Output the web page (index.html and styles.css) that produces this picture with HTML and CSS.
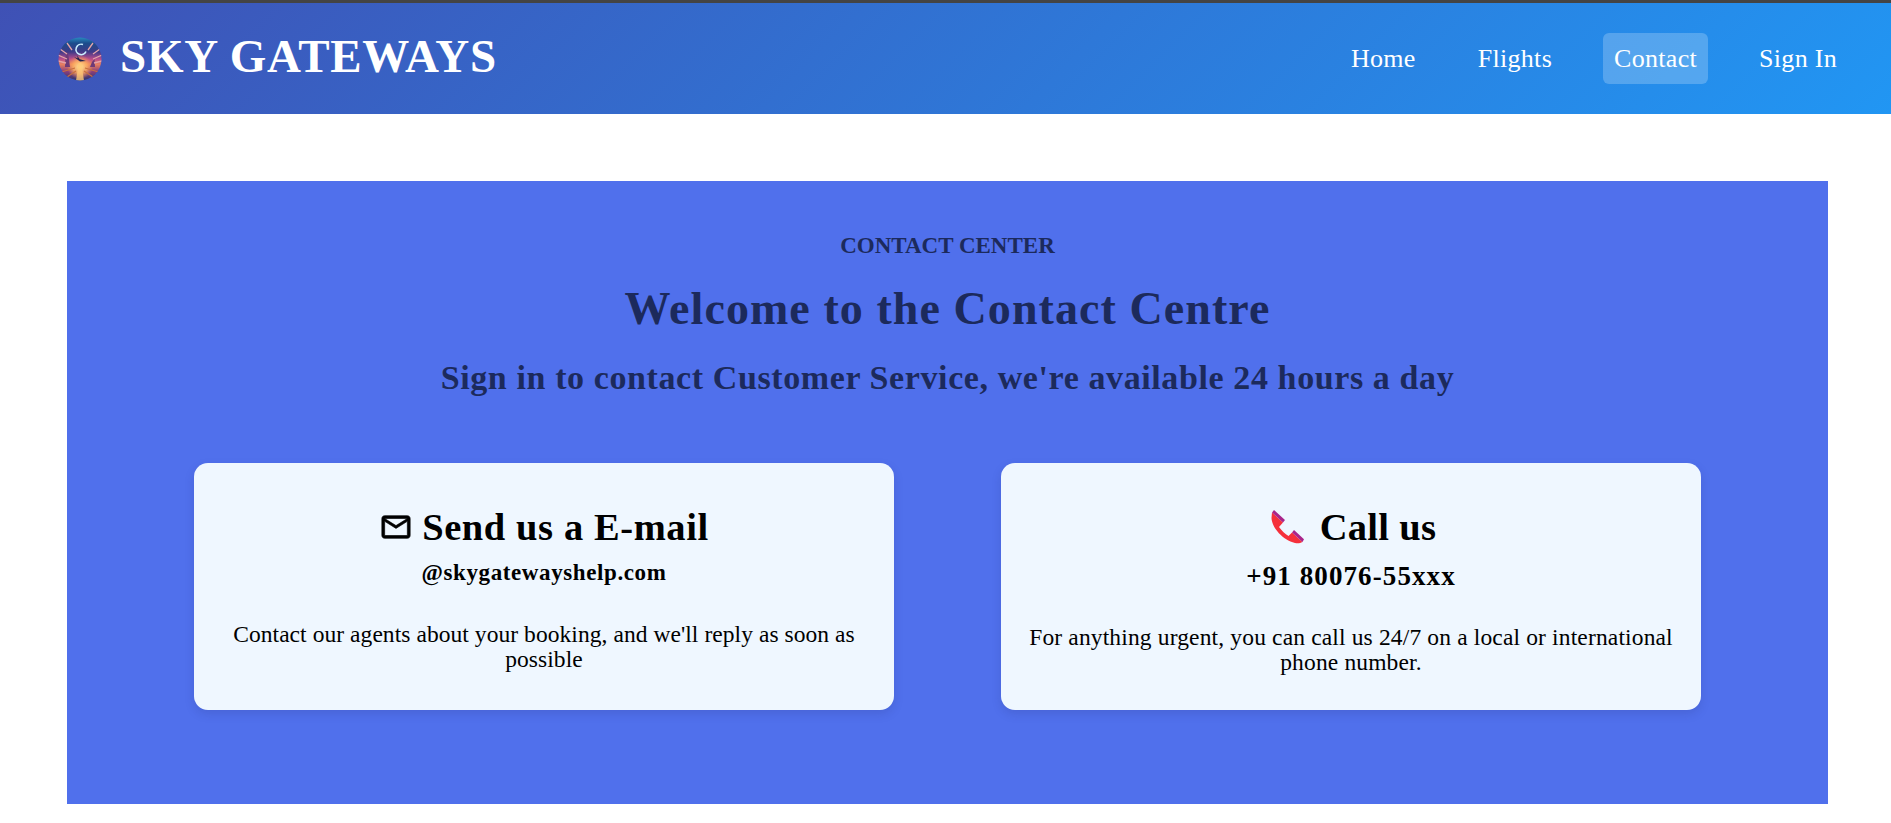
FILE: index.html
```html
<!DOCTYPE html>
<html lang="en">
<head>
<meta charset="utf-8">
<title>Sky Gateways</title>
<link rel="stylesheet" href="styles.css">
</head>
<body>
<header class="topbar">
  <div class="brand">
    <svg class="logo" viewBox="0 0 44 44" aria-hidden="true">
      <defs>
        <clipPath id="disc"><circle cx="22" cy="22" r="21.5"/></clipPath>
        <linearGradient id="sky" x1="0" y1="0" x2="0" y2="1">
          <stop offset="0" stop-color="#2b8fc4"/>
          <stop offset=".14" stop-color="#1b4d8c"/>
          <stop offset=".34" stop-color="#3f3a88"/>
          <stop offset=".5" stop-color="#b94c8c"/>
          <stop offset=".62" stop-color="#e9805e"/>
          <stop offset=".78" stop-color="#8a3f7c"/>
          <stop offset="1" stop-color="#25356e"/>
        </linearGradient>
        <radialGradient id="sun" cx=".5" cy=".5" r=".5">
          <stop offset="0" stop-color="#ffe79a"/>
          <stop offset=".55" stop-color="#ffb060" stop-opacity=".8"/>
          <stop offset="1" stop-color="#ff9a50" stop-opacity="0"/>
        </radialGradient>
      </defs>
      <g clip-path="url(#disc)">
        <rect width="44" height="44" fill="url(#sky)"/>
        <ellipse cx="22" cy="30" rx="13" ry="12" fill="url(#sun)"/>
        <path d="M18 44 L20.5 26 L23.5 26 L26 44 Z" fill="#ffc877" opacity=".8"/>
        <path d="M7 30 L7.5 19 L9 15 L10.5 19 L12 30 Z M37 30 L36.5 22 L34 25 L32 30 Z" fill="#6d3a78"/>
        <path d="M0 18 L9 22 M0 24 L8 26 M2 12 L9 17 M44 18 L35 22 M44 24 L36 26 M42 12 L35 17 M9 6 L14 13 M35 6 L30 13" stroke="#e3a3a8" stroke-width="1.3"/>
        <path d="M0 36 L17 31 M44 36 L27 31 M6 42 L18 34 M38 42 L26 34" stroke="#c9703e" stroke-width="1.1"/>
        <path d="M16 20 L23 22.5 L28 24 L22 24.5 Z M19 18.5 L22 22.5 L20 22.5 Z" fill="#23224e"/>
      </g>
      <path d="M25 7.5 A5.2 5.2 0 1 0 28 14.5" fill="none" stroke="#c9efff" stroke-width="1.6"/>
    </svg>
    <span class="brand-name">SKY GATEWAYS</span>
  </div>
  <nav class="nav">
    <a class="nav-link" href="#">Home</a>
    <a class="nav-link" href="#">Flights</a>
    <a class="nav-link is-active" href="#">Contact</a>
    <a class="nav-link" href="#">Sign In</a>
  </nav>
</header>
<main class="page">
  <section class="panel">
    <p class="eyebrow">CONTACT CENTER</p>
    <h1 class="title">Welcome to the Contact Centre</h1>
    <h2 class="subtitle">Sign in to contact Customer Service, we're available 24 hours a day</h2>
    <div class="cards">
      <article class="card">
        <h3 class="card-title">
          <svg class="icon-mail" viewBox="0 0 24 24" aria-hidden="true">
            <path d="M20 4H4c-1.1 0-2 .9-2 2v12c0 1.1.9 2 2 2h16c1.1 0 2-.9 2-2V6c0-1.1-.9-2-2-2zm0 14H4V8l8 5 8-5v10zm-8-7L4 6h16l-8 5z" fill="#000" stroke="#000" stroke-width=".45"/>
          </svg>
          <span>Send us a E-mail</span>
        </h3>
        <p class="card-mail">@skygatewayshelp.com</p>
        <p class="card-text">Contact our agents about your booking, and we'll reply as soon as possible</p>
      </article>
      <article class="card">
        <h3 class="card-title card-title-call">
          <svg class="icon-phone" viewBox="0 0 34 34" aria-hidden="true">
            <path d="M1 2.5 L12 12.5 L8 17 C11 21 14 24 17.5 26 L21 22.5 L31.5 32 C29 33.5 26.5 33.5 24 33 C12 30 1 18 0.5 8 Z" fill="#f5303b"/>
            <path d="M3 0 L14 10 L12 12.5 L1 2.5 Z M23 20 L33 29.3 L31.5 32 L21 22.5 Z" fill="#a9248a"/>
          </svg>
          <span>Call us</span>
        </h3>
        <p class="card-phone">+91 80076-55xxx</p>
        <p class="card-text card-text-call">For anything urgent, you can call us 24/7 on a local or international phone number.</p>
      </article>
    </div>
  </section>
</main>
</body>
</html>
```
FILE: styles.css
```css
* { box-sizing: border-box; }
html, body { margin: 0; padding: 0; }
body {
  background: #fff;
  color: #000;
  font-family: "Liberation Serif", Georgia, serif;
  height: 823px;
  overflow: hidden;
}
.topbar {
  height: 114px;
  border-top: 3px solid #444;
  background: linear-gradient(135deg, #3f51b5 0%, #2196f3 100%);
  display: flex;
  align-items: center;
  justify-content: space-between;
  padding: 0 43px 0 58px;
}
.brand { display: flex; align-items: center; gap: 18px; margin-top: -6px; }
.logo { width: 44px; height: 44px; display: block; margin-top: 6px; }
.brand-name { color: #fff; font-size: 47px; font-weight: 700; letter-spacing: .75px; line-height: 54px; }
.nav { display: flex; align-items: center; gap: 40px; }
.nav-link {
  color: #fff;
  text-decoration: none;
  font-size: 26px;
  letter-spacing: .3px;
  padding: 10px 11px;
  border-radius: 6px;
  line-height: 31px;
}
.is-active { background: rgba(255, 255, 255, .22); }
.page { padding: 67px 63px 0 67px; }
.panel {
  background: #5070ec;
  height: 623px;
  padding: 52px 127px 0;
  text-align: center;
  color: #1c2a5c;
}
.eyebrow { margin: 0; font-size: 23px; font-weight: 700; line-height: 26px; }
.title { margin: 25px 0 0; font-size: 46px; font-weight: 700; letter-spacing: 1.07px; line-height: 50px; }
.subtitle { margin: 25px 0 0; font-size: 34px; font-weight: 700; letter-spacing: .6px; line-height: 38px; }
.cards { display: flex; justify-content: space-between; margin-top: 66px; }
.card {
  width: 700px;
  height: 247px;
  background: #eff7ff;
  border-radius: 14px;
  box-shadow: 0 4px 10px rgba(40, 50, 120, .18);
  padding: 42px 25px 0;
  color: #000;
}
.card-title {
  margin: 0;
  display: flex;
  justify-content: center;
  align-items: center;
  gap: 9px;
  font-size: 38.5px;
  font-weight: 700;
  letter-spacing: .6px;
  line-height: 44px;
}
.card-title-call { gap: 15px; letter-spacing: .3px; padding-left: 5px; }
.icon-mail { width: 34px; height: 34px; }
.icon-phone { width: 34px; height: 34px; }
.card-mail { margin: 11px 0 0; font-size: 23px; font-weight: 700; letter-spacing: .6px; line-height: 26px; }
.card-phone { margin: 13px 0 0; font-size: 27px; font-weight: 700; letter-spacing: 1.1px; line-height: 28px; }
.card-text { margin: 36px 0 0; font-size: 23.5px; letter-spacing: .06px; line-height: 25px; }
.card-text-call { margin-top: 35px; letter-spacing: .15px; }
```
